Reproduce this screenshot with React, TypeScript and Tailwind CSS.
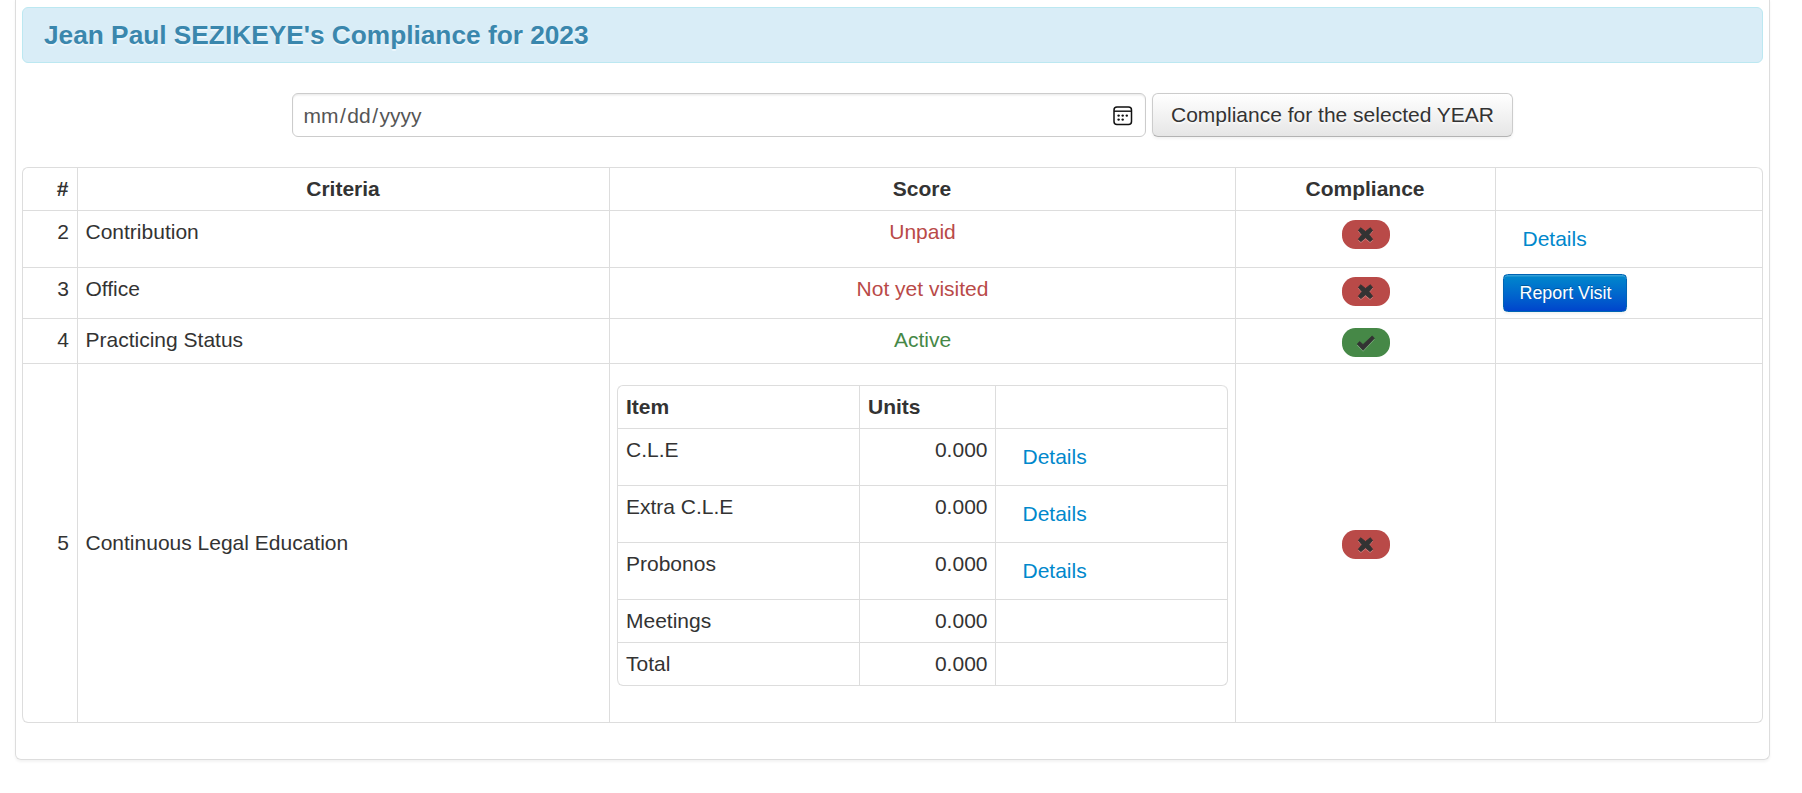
import type { ReactNode } from "react";

function RemoveIcon() {
  const cross = "M5.8 3.8 L10.5 7.6 L15.2 3.8 L17.6 6.2 L14 10.7 L17.6 15.2 L15.2 17.6 L10.5 13.8 L5.8 17.6 L3.4 15.2 L7 10.7 L3.4 6.2 Z";
  return (
    <svg width="21" height="21" viewBox="0 0 21 21" className="block">
      <path d={cross} transform="translate(0 1.2)" fill="#fff" fillOpacity="0.22" stroke="#fff" strokeOpacity="0.12" />
      <path d={cross} fill="#333" stroke="#333" strokeWidth="0.9" strokeLinejoin="round" />
    </svg>
  );
}

function CheckIcon() {
  const tick = "M2.2 12 L4.7 9.6 L8 12.6 L17.2 3.9 L19.4 6.3 L8.1 18.2 Z";
  return (
    <svg width="21" height="21" viewBox="0 0 21 21" className="block">
      <path d={tick} transform="translate(0 1.2)" fill="#fff" fillOpacity="0.22" stroke="#fff" strokeOpacity="0.12" />
      <path d={tick} fill="#333" stroke="#333" strokeWidth="0.8" strokeLinejoin="round" />
    </svg>
  );
}

function CalendarIcon() {
  return (
    <svg width="20" height="20" viewBox="0 0 20 20" className="block">
      <rect x="1" y="1" width="17.5" height="17.5" rx="3" fill="none" stroke="#111" strokeWidth="1.5" />
      <path d="M1 5.2 H18.5" stroke="#111" strokeWidth="1.4" />
      <g fill="#111">
        <circle cx="5.6" cy="9.6" r="1.2" />
        <circle cx="9.7" cy="9.6" r="1.2" />
        <circle cx="13.8" cy="9.6" r="1.2" />
        <circle cx="5.6" cy="13.6" r="1.2" />
        <circle cx="9.7" cy="13.6" r="1.2" />
      </g>
    </svg>
  );
}

function Badge({ ok = false }: { ok?: boolean }) {
  return (
    <span
      className={`mx-auto mt-[3px] flex h-[29px] w-12 items-center justify-center rounded-[13.5px] ${
        ok ? "bg-[#468847]" : "bg-[#b94a48]"
      }`}
    >
      {ok ? <CheckIcon /> : <RemoveIcon />}
    </span>
  );
}

function DetailsLink() {
  return (
    <a href="#" className="block h-11 px-[19.5px] pt-[7px] text-[#0088cc]">
      Details
    </a>
  );
}

const box = "border-t border-l border-[#dddddd] py-1.5";
const cell = `${box} pl-[7.5px] pr-2`;
const evenCell = `${box} px-[7.5px]`;
const actionCell = `${box} pl-[7px] pr-2`;

function CleTable() {
  const rows = [
    { item: "C.L.E", details: true },
    { item: "Extra C.L.E", details: true },
    { item: "Probonos", details: true },
    { item: "Meetings", details: false },
    { item: "Total", details: false },
  ];
  return (
    <table className="mb-[30px] w-[611px] table-fixed border-separate border-spacing-0 rounded-md border border-t-0 border-l-0 border-[#dddddd] text-left">
      <colgroup>
        <col className="w-[242px]" />
        <col className="w-[136px]" />
        <col className="w-[232px]" />
      </colgroup>
      <thead>
        <tr className="h-[43px] align-bottom">
          <th className={`${box} rounded-tl-md px-2`}>Item</th>
          <th className={`${box} px-2`}>Units</th>
          <th className={`${cell} rounded-tr-md`} />
        </tr>
      </thead>
      <tbody>
        {rows.map((r) => (
          <tr key={r.item} className={`align-top ${r.details ? "h-[57px]" : "h-[43px]"}`}>
            <td className={`${box} px-2 ${r.item === "Total" ? "rounded-bl-md" : ""}`}>{r.item}</td>
            <td className={`${box} pr-[7.5px] pl-2 text-right`}>0.000</td>
            <td className={actionCell}>{r.details && <DetailsLink />}</td>
          </tr>
        ))}
      </tbody>
    </table>
  );
}

type Row = { n: number; name: string; score: ReactNode; tone: string; ok: boolean; height: string; action?: ReactNode };

const criteria: Row[] = [
  { n: 2, name: "Contribution", score: "Unpaid", tone: "text-[#b94a48]", ok: false, height: "h-[57px]", action: <DetailsLink /> },
  {
    n: 3,
    name: "Office",
    score: "Not yet visited",
    tone: "text-[#b94a48]",
    ok: false,
    height: "h-[51px]",
    action: (
      <button className="block h-[38px] w-[124px] rounded-[4.5px] border border-[#0064b4] bg-linear-to-b from-[#0088cc] to-[#0044cc] pl-px text-[17.85px] leading-[30px] whitespace-nowrap text-white shadow-[inset_0_1.5px_0_rgba(255,255,255,0.2),0_1.5px_3px_rgba(0,0,0,0.05)] [text-shadow:0_-1.5px_0_rgba(0,0,0,0.25)]">
        Report Visit
      </button>
    ),
  },
  { n: 4, name: "Practicing Status", score: "Active", tone: "text-[#468847]", ok: true, height: "h-[45px]" },
];

export default function App() {
  return (
    <div className="h-[793px] overflow-hidden bg-white font-['Liberation_Sans',Arial,sans-serif] text-[21px] leading-[30px] text-[#333333]">
      <main className="ml-[15px] h-[760px] w-[1755px] rounded-b-md border border-t-0 border-[#dddddd] px-1.5 pt-[7px] shadow-[0_1.5px_3px_rgba(0,0,0,0.05)]">
        <div className="flex h-14 w-[1741px] items-center rounded-md border border-[#bce8f1] bg-[#d9edf7] pl-[21px]">
          <h4 className="text-[26.25px] leading-[30px] font-bold text-[#3a87ad] [text-shadow:0_1.5px_0_rgba(255,255,255,0.5)]">
            Jean Paul SEZIKEYE&apos;s Compliance for 2023
          </h4>
        </div>

        <form className="mt-[30px] ml-[270px] flex h-11 gap-1.5">
          <div className="flex w-[854px] items-center justify-between rounded-md border border-[#cccccc] bg-white pr-3 pl-[10.5px] text-[#555555] shadow-[inset_0_1.5px_1.5px_rgba(0,0,0,0.075)]">
            <span className="flex pt-0.5">
              <span>mm</span>
              <span className="px-[1.5px]">/</span>
              <span>dd</span>
              <span className="px-[1.5px]">/</span>
              <span>yyyy</span>
            </span>
            <span className="pt-px">
              <CalendarIcon />
            </span>
          </div>
          <button
            type="button"
            className="w-[361px] rounded-md border border-[#cccccc] border-b-[#b3b3b3] bg-linear-to-b from-white to-[#e6e6e6] whitespace-nowrap shadow-[inset_0_1.5px_0_rgba(255,255,255,0.2),0_1.5px_3px_rgba(0,0,0,0.05)] [text-shadow:0_1.5px_1.5px_rgba(255,255,255,0.75)]"
          >
            Compliance for the selected YEAR
          </button>
        </form>

        <table className="mt-[30px] w-[1741px] table-fixed border-separate border-spacing-0 rounded-md border border-t-0 border-l-0 border-[#dddddd]">
          <colgroup>
            <col className="w-[55px]" />
            <col className="w-[532px]" />
            <col className="w-[626px]" />
            <col className="w-[260px]" />
            <col className="w-[267px]" />
          </colgroup>
          <thead>
            <tr className="h-[43px]">
              <th className={`${box} rounded-tl-md pr-[8.5px] text-right`}>#</th>
              <th className={`${box} pr-2 pl-[7px]`}>Criteria</th>
              <th className={`${box} pr-2 pl-[7px]`}>Score</th>
              <th className={`${box} pr-2 pl-[7px]`}>Compliance</th>
              <th className={`${cell} rounded-tr-md`} />
            </tr>
          </thead>
          <tbody>
            {criteria.map((c) => (
              <tr key={c.n} className={`align-top ${c.height}`}>
                <td className={`${cell} text-right`}>{c.n}</td>
                <td className={cell}>{c.name}</td>
                <td className={`${evenCell} text-center ${c.tone}`}>{c.score}</td>
                <td className={evenCell}>
                  <Badge ok={c.ok} />
                </td>
                <td className={actionCell}>{c.action}</td>
              </tr>
            ))}
            <tr className="h-[359px] align-middle">
              <td className={`${cell} rounded-bl-md text-right`}>5</td>
              <td className={cell}>Continuous Legal Education</td>
              <td className="border-t border-l border-[#dddddd] pt-[21px] pr-2 pb-1.5 pl-[7px]">
                <CleTable />
              </td>
              <td className={evenCell}>
                <Badge />
              </td>
              <td className={`${cell} rounded-br-md`} />
            </tr>
          </tbody>
        </table>
      </main>
    </div>
  );
}
